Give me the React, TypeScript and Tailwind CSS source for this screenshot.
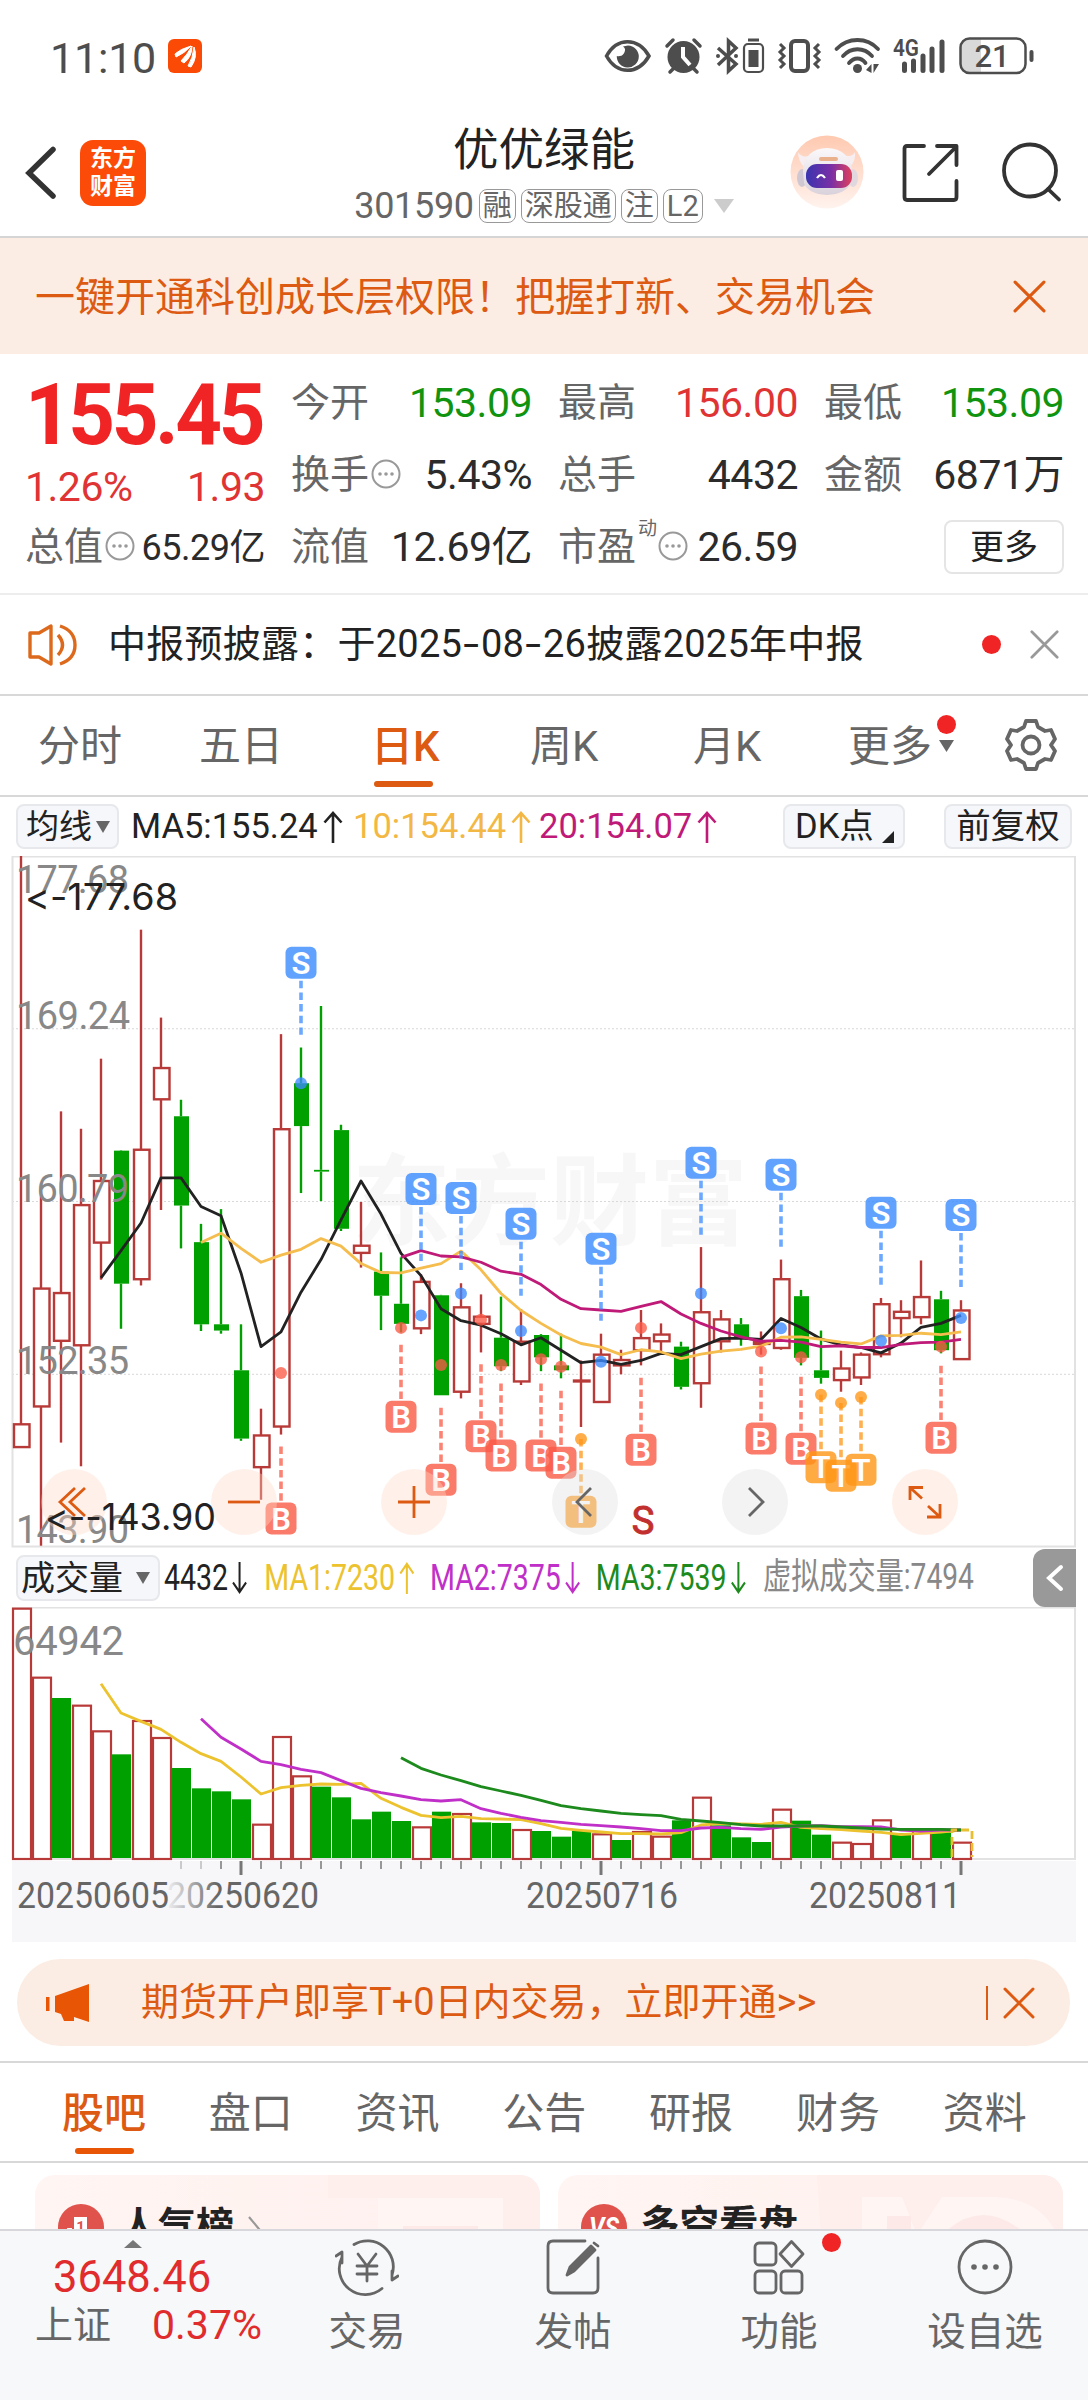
import type { ReactNode } from "react";

interface Candle {
  high: number;
  top: number;
  bottom: number;
  low: number;
  up: boolean;
}

type Row = [number, number, number, number, 0 | 1];

// high, body top, body bottom, low, up(1) / down(0)
const rows: Row[] = [
  [13, 1286, 1337, 1337, 1],
  [770, 982, 1246, 1558, 1],
  [585, 992, 1099, 1327, 1],
  [624, 795, 1109, 1380, 1],
  [467, 741, 879, 962, 1],
  [672, 673, 971, 1072, 0],
  [178, 671, 961, 975, 1],
  [375, 488, 558, 806, 1],
  [559, 596, 796, 892, 0],
  [837, 878, 1062, 1077, 0],
  [804, 1062, 1076, 1083, 0],
  [1062, 1165, 1318, 1323, 0],
  [1251, 1311, 1382, 1455, 1],
  [412, 625, 1291, 1309, 1],
  [442, 522, 618, 768, 0],
  [349, 716, 720, 786, 0],
  [615, 627, 848, 853, 0],
  [788, 886, 902, 935, 1],
  [901, 944, 998, 1075, 0],
  [912, 1016, 1061, 1080, 0],
  [950, 967, 1071, 1084, 1],
  [996, 997, 1221, 1221, 0],
  [970, 1024, 1213, 1228, 1],
  [995, 1045, 1061, 1125, 1],
  [1000, 1092, 1156, 1167, 0],
  [1028, 1101, 1190, 1198, 1],
  [1084, 1086, 1136, 1167, 0],
  [1083, 1154, 1165, 1183, 0],
  [1143, 1188, 1190, 1292, 1],
  [1083, 1130, 1236, 1236, 1],
  [1119, 1142, 1154, 1174, 1],
  [1030, 1093, 1120, 1154, 1],
  [1060, 1085, 1100, 1125, 1],
  [1101, 1112, 1202, 1208, 0],
  [889, 1035, 1194, 1249, 1],
  [1030, 1051, 1100, 1125, 1],
  [1048, 1062, 1092, 1110, 0],
  [1078, 1101, 1106, 1130, 1],
  [917, 961, 1115, 1119, 1],
  [985, 999, 1137, 1154, 0],
  [1076, 1165, 1182, 1195, 0],
  [1121, 1161, 1187, 1213, 1],
  [1125, 1130, 1181, 1198, 1],
  [1003, 1017, 1129, 1136, 1],
  [1008, 1034, 1048, 1091, 1],
  [919, 1001, 1046, 1062, 1],
  [987, 1006, 1120, 1127, 0],
  [1008, 1031, 1140, 1140, 1],
];

const candles: Candle[] = rows.map(([high, top, bottom, low, up]) => ({
  high,
  top,
  bottom,
  low,
  up: up === 1,
}));

const ma5 = [
  958, 897, 835, 734, 734, 798, 819, 947, 1112, 1079, 990, 917, 828, 741, 815,
  903, 953, 1027, 1054, 1064, 1083, 1108, 1092, 1120, 1148, 1143, 1152, 1143,
  1127, 1130, 1112, 1094, 1093, 1096, 1049, 1069, 1095, 1108, 1114, 1126, 1104,
  1069, 1060, 1042,
];
const ma10 = [
  879, 858, 892, 923, 907, 894, 870, 887, 926, 946, 947, 936, 926, 898, 940,
  993, 1031, 1060, 1086, 1105, 1113, 1130, 1119, 1124, 1139, 1129, 1122, 1118,
  1111, 1091, 1090, 1096, 1102, 1106, 1088, 1087, 1082, 1085, 1079,
];
const ma20 = [
  912, 897, 909, 911, 923, 943, 950, 973, 1006, 1027, 1030, 1033, 1022, 1011,
  1039, 1060, 1077, 1090, 1100, 1098, 1102, 1112, 1110, 1114, 1114, 1107, 1103,
  1102, 1096,
];

// candle index, badge level, dot level
const sells = [
  [14, 252, 522],
  [20, 759, 1042],
  [22, 779, 993],
  [25, 837, 1077],
  [29, 893, 1146],
  [34, 700, 993],
  [38, 727, 1071],
  [43, 812, 1099],
  [47, 817, 1048],
];
const buys = [
  [13, 1497, 1171],
  [19, 1269, 1070],
  [21, 1410, 1153],
  [23, 1313, 1052],
  [24, 1356, 1153],
  [26, 1356, 1140],
  [27, 1372, 1157],
  [31, 1343, 1070],
  [37, 1318, 1123],
  [39, 1341, 1136],
  [46, 1316, 1112],
];
const trades = [
  [28, 1482, 1319],
  [40, 1382, 1220],
  [41, 1401, 1238],
  [42, 1388, 1225],
];

const volumes: [number, 0 | 1][] = [
  [203, 1], [410, 1], [474, 0], [494, 1], [571, 1], [643, 0], [540, 1],
  [591, 1], [684, 0], [745, 0], [754, 0], [778, 0], [851, 1], [588, 1],
  [706, 1], [740, 0], [772, 0], [838, 0], [815, 0], [843, 0], [859, 1],
  [815, 0], [819, 1], [847, 0], [849, 0], [867, 1], [873, 0], [890, 0],
  [872, 0], [880, 1], [900, 0], [873, 1], [887, 1], [841, 0], [770, 1],
  [856, 0], [892, 0], [906, 0], [806, 1], [842, 0], [884, 0], [905, 1],
  [909, 1], [838, 1], [880, 0], [865, 1], [877, 0], [905, 1],
];
const vol1 = [
  431, 519, 544, 568, 607, 641, 664, 711, 762, 743, 736, 732, 733, 730, 775,
  802, 826, 833, 829, 836, 837, 839, 851, 865, 871, 876, 881, 881, 882, 878,
  855, 850, 852, 853, 847, 862, 866, 869, 873, 877, 884, 880, 876, 870,
];
const vol2 = [
  536, 592, 627, 664, 674, 688, 698, 722, 745, 758, 768, 779, 783, 779, 806,
  820, 832, 842, 847, 853, 857, 861, 866, 872, 872, 864, 862, 866, 868, 861,
  858, 857, 860, 860, 861, 870, 873, 870, 870,
];
const vol3 = [
  653, 685, 705, 722, 740, 753, 766, 781, 797, 806, 813, 820, 824, 827, 838,
  843, 848, 854, 858, 858, 858, 858, 861, 864, 867, 868, 868, 868, 870,
];

const RED = "#b83a38";
const GREEN = "#00a000";

const xOf = (i: number) => 21 + i * 20;
const yOf = (v: number) => (v - 13) / 2.24;
const volY = (v: number) => (v - 201) / 3;

const linePoints = (
  values: number[],
  start: number,
  scale: (v: number) => number
) => values.map((v, i) => `${xOf(start + i)},${scale(v)}`).join(" ");

interface MarkerProps {
  index: number;
  badge: number;
  dot: number;
  label: "S" | "B" | "T";
}

const markerColors = { S: "#3b8bff", B: "#fa5a46", T: "#ff9615" };

const Marker = ({ index, badge, dot, label }: MarkerProps) => {
  const x = xOf(index);
  const y = yOf(badge);
  const color = markerColors[label];
  let from = y + 18;
  let to = y + 72;
  if (label === "B") {
    from = y - 72;
    to = y - 17;
  }
  if (label === "T") {
    from = yOf(dot);
    to = y - 17;
  }
  return (
    <g>
      <circle cx={x} cy={yOf(dot)} r={6} fill={color} fillOpacity={0.78} />
      <line
        x1={x}
        x2={x}
        y1={from}
        y2={to}
        stroke={color}
        strokeOpacity={0.75}
        strokeWidth={3.6}
        strokeDasharray="7.5 4.2"
      />
      <rect
        x={x - 15.5}
        y={y - 16}
        width={31}
        height={32}
        rx={6}
        fill={color}
        fillOpacity={0.8}
      />
      <text
        x={x}
        y={y + 11}
        textAnchor="middle"
        fontSize={31}
        fontWeight={600}
        fill="#fff"
        className="font-['Roboto',sans-serif]"
      >
        {label}
      </text>
    </g>
  );
};

const RoundButton = ({
  x,
  gray = false,
  children,
}: {
  x: number;
  gray?: boolean;
  children: ReactNode;
}) => (
  <g transform={`translate(${x} 646)`}>
    <circle r={33} fill={gray ? "#e0e0e0" : "#ffd9c4"} fillOpacity={0.38} />
    <g fill="none" stroke={gray ? "#666" : "#dd5a12"} strokeWidth={2.8}>
      {children}
    </g>
  </g>
);

const KLineChart = () => (
  <svg width="1088" height="692" viewBox="0 0 1088 692" className="block">
    <text
      x="352"
      y="381"
      fontSize="99"
      fontWeight="700"
      fill="#f7f7f7"
      className="font-['Noto_Sans_CJK_SC',sans-serif]"
    >
      东方财富
    </text>
    {[400, 787, 1174].map((v) => (
      <line
        key={v}
        x1="12"
        x2="1075"
        y1={yOf(v)}
        y2={yOf(v)}
        stroke="#d8d8d8"
        strokeDasharray="2 2"
      />
    ))}
    <rect x="12.5" y="0.5" width="1062.5" height="690" fill="none" stroke="#e2e2e2" strokeWidth="2" />

    {candles.map((c, i) => {
      const x = xOf(i);
      const color = c.up ? RED : GREEN;
      return (
        <g key={i} stroke={color} strokeWidth={2.4}>
          <line x1={x} x2={x} y1={yOf(c.high)} y2={yOf(c.top)} />
          <line x1={x} x2={x} y1={yOf(c.bottom)} y2={yOf(c.low)} />
          {c.up ? (
            <rect
              x={x - 7}
              y={yOf(c.top)}
              width={15.5}
              height={yOf(c.bottom) - yOf(c.top)}
              fill={c.bottom - c.top < 8 ? RED : "#fff"}
            />
          ) : (
            <rect
              x={x - 7}
              y={yOf(c.top)}
              width={15}
              height={yOf(c.bottom) - yOf(c.top)}
              fill={GREEN}
              stroke="none"
            />
          )}
        </g>
      );
    })}

    <g fill="none" strokeWidth="2.8" strokeLinejoin="round">
      <polyline points={linePoints(ma5, 4, yOf)} stroke="#222" />
      <polyline points={linePoints(ma10, 9, yOf)} stroke="#f5bc4e" />
      <polyline points={linePoints(ma20, 19, yOf)} stroke="#bf1a78" />
    </g>

    <g className="font-['Roboto',sans-serif]" fontSize="38" fill="#888">
      <text x="16" y="37" textLength="113">177.68</text>
      <text x="16" y="173" textLength="114">169.24</text>
      <text x="16" y="346" textLength="113">160.79</text>
      <text x="16" y="518" textLength="113">152.35</text>
      <text x="16" y="687" textLength="113">143.90</text>
    </g>

    {buys.map(([i, badge, dot]) => (
      <Marker key={i} index={i} badge={badge} dot={dot} label="B" />
    ))}
    {sells.map(([i, badge, dot]) => (
      <Marker key={i} index={i} badge={badge} dot={dot} label="S" />
    ))}
    {trades.map(([i, badge, dot]) => (
      <Marker key={i} index={i} badge={badge} dot={dot} label="T" />
    ))}

    <RoundButton x={74}>
      <path d="M1 -14 L-14 0 L1 14 M11 -14 L-4 0 L11 14" />
    </RoundButton>
    <RoundButton x={244}>
      <path d="M-16 0 H16" />
    </RoundButton>
    <RoundButton x={414}>
      <path d="M-16 0 H16 M0 -16 V16" />
    </RoundButton>
    <RoundButton x={585} gray>
      <path d="M6 -14 L-8 0 L6 14" />
    </RoundButton>
    <RoundButton x={755} gray>
      <path d="M-6 -14 L8 0 L-6 14" />
    </RoundButton>
    <RoundButton x={925}>
      <path d="M-15 -2 V-14.500 H-2 M-15 -14.500 L-3 -3.500 M2 15 H15 V2 M15 15 L3 4" />
    </RoundButton>

    <g
      className="font-['Inter',sans-serif] [font-variant-ligatures:none] [font-feature-settings:'calt'_0]"
      fontSize="37"
      fill="#222"
    >
      <text x="25" y="54" textLength="153" lengthAdjust="spacingAndGlyphs">&lt;-177.68</text>
      <text x="45" y="674" textLength="171" lengthAdjust="spacingAndGlyphs">&lt;--143.90</text>
    </g>
    <text
      x="643"
      y="678"
      textAnchor="middle"
      fontSize="38"
      fill="#c22f2f"
      stroke="#c22f2f"
      className="font-['Roboto',sans-serif]"
    >
      S
    </text>
  </svg>
);

const VolumeChart = () => (
  <svg width="1088" height="254" viewBox="0 0 1088 254" className="block">
    <path d="M12 0.500 H1075 V252 H12" fill="none" stroke="#e2e2e2" strokeWidth="2" />
    {volumes.map(([v, up], i) => (
      <rect
        key={i}
        x={up ? xOf(i) - 8 : xOf(i) - 9}
        y={up ? volY(v) + 1 : volY(v)}
        width={up ? 18 : 19}
        height={volY(954) - volY(v)}
        fill={up ? "#fff" : GREEN}
        stroke={up ? RED : "none"}
        strokeWidth={2.2}
      />
    ))}
    <text
      x="13"
      y="48"
      fontSize="40"
      fill="#888"
      textLength="111"
      className="font-['Roboto',sans-serif]"
    >
      64942
    </text>
    <g fill="none" strokeWidth="2.8" strokeLinejoin="round">
      <polyline points={linePoints(vol1, 4, volY)} stroke="#ecc22e" />
      <polyline points={linePoints(vol2, 9, volY)} stroke="#c030c8" />
      <polyline points={linePoints(vol3, 19, volY)} stroke="#1c8a1c" />
      <path d="M952 250 V223 H972 V250" stroke="#e8bf30" strokeDasharray="8 4" />
    </g>
  </svg>
);

const DateAxis = () => (
  <div className="ml-3 h-[81px] w-[1064px] bg-[#f7f7fa]">
    <svg width="1064" height="81" viewBox="12 0 1064 81" className="block">
      <defs>
        <linearGradient id="fade" x1="0" x2="1">
          <stop offset="0" stopColor="#666" stopOpacity="0.05" />
          <stop offset="0.33" stopColor="#666" />
        </linearGradient>
      </defs>
      {volumes.map((_, i) => {
        const major = i === 11 || i === 29 || i === 47;
        if (i < 8) return null;
        return (
          <line
            key={i}
            x1={xOf(i)}
            x2={xOf(i)}
            y1="0"
            y2={major ? 14 : 8}
            stroke={i < 10 ? "#bbb" : "#777"}
            strokeWidth={major ? 3 : 1.5}
          />
        );
      })}
      <g className="font-['Roboto',sans-serif]" fontSize="36.500" fill="#666">
        <text x="17" y="47" textLength="152" lengthAdjust="spacingAndGlyphs">20250605</text>
        <text x="167" y="47" textLength="152" lengthAdjust="spacingAndGlyphs" fill="url(#fade)">20250620</text>
        <text x="526" y="47" textLength="152" lengthAdjust="spacingAndGlyphs">20250716</text>
        <text x="809" y="47" textLength="152" lengthAdjust="spacingAndGlyphs">20250811</text>
      </g>
    </svg>
  </div>
);

const StatusIcons = () => (
  <svg width="440" height="40" viewBox="0 0 440 40" fill="none" stroke="#4d4d4d">
    <path d="M6.500 20 C17 1 38 1 49 20 C38 39 17 39 6.500 20Z" strokeWidth="3.500" />
    <path d="M28 9.500 A11 11 0 1 1 16.800 20 A6.500 6.500 0 0 0 25 13 A6 6 0 0 0 23 10.500Z" fill="#4d4d4d" stroke="none" />
    <circle cx="83.500" cy="21" r="16" fill="#4d4d4d" stroke="none" />
    <path d="M83 11 V21 L90 29" stroke="#fff" strokeWidth="4" />
    <path d="M67 10 L73 4 M94 4 L100 10 M74 32 L70 36 M93 32 L97 36" strokeWidth="3.500" strokeLinecap="round" />
    <path d="M118 12 L136 28 L128.500 35 V5 L136 12 L118 29" strokeWidth="3.500" />
    <circle cx="118" cy="20" r="2" fill="#4d4d4d" stroke="none" />
    <circle cx="136" cy="20" r="2" fill="#4d4d4d" stroke="none" />
    <rect x="144" y="8" width="19" height="28" rx="4" strokeWidth="2.200" />
    <path d="M148 4 H159" strokeWidth="3" />
    <rect x="148.500" y="14" width="10" height="17" fill="#4d4d4d" stroke="none" />
    <rect x="191" y="5" width="17" height="30" rx="4" strokeWidth="4" />
    <path d="M180 8 L184 12 L180 16 L184 20 L180 24 L184 28 L180 32 M219 8 L215 12 L219 16 L215 20 L219 24 L215 28 L219 32" strokeWidth="3" />
    <path d="M236.500 13 C248 1 267 1 278 13 M243 20 C251 11 264 11 272 20 M249 27 C254 21 261 21 265.500 27" strokeWidth="3.800" strokeLinecap="round" />
    <circle cx="257.500" cy="32.500" r="4.500" fill="#4d4d4d" stroke="none" />
    <path d="M266 34 L271.500 28 V37Z M273.500 28 H279 L273.500 37Z" fill="#4d4d4d" stroke="none" />
    <text x="293" y="20" fontSize="23" fontWeight="600" fill="#4d4d4d" stroke="none" textLength="26" lengthAdjust="spacingAndGlyphs" className="font-['Roboto',sans-serif]">
      4G
    </text>
    <path d="M304.500 28 V34.500 M313.500 25 V34.500 M323 20 V34.500 M332 13 V34.500 M342 6 V34.500" strokeWidth="5" strokeLinecap="round" />
    <path d="M369 3 H381 V37 H369 Q361 36 361 28 V12 Q361 4 369 3Z" fill="#d9d9d9" stroke="none" />
    <rect x="360.500" y="2.500" width="65" height="34.500" rx="9" strokeWidth="2.500" />
    <rect x="429.500" y="14" width="4" height="12" rx="2" fill="#4d4d4d" stroke="none" />
    <text x="392" y="31" textAnchor="middle" fontSize="31" fontWeight="500" fill="#4d4d4d" stroke="none" className="font-['Roboto',sans-serif]">
      21
    </text>
  </svg>
);

const StatusBar = () => (
  <div className="flex h-[112px] items-start pl-[50px]">
    <div className="mt-[37px] w-[118px] text-[43px] leading-[42px] tracking-[-0.2px] text-[#4d4d4d]">
      11:10
    </div>
    <svg width="34" height="34" viewBox="0 0 34 34" className="mt-[39px]">
      <rect width="34" height="34" rx="6" fill="#fb4a05" />
      <path d="M7 15 Q12 10 23 7 Q17 14 8 18Z M13 22 Q19 16 24 7 Q24 18 16 24Z M20 27 Q25 19 26 8 Q30 18 23 28Z" fill="#fff" stroke="#fff" />
    </svg>
    <div className="mt-[36px] ml-[398px]">
      <StatusIcons />
    </div>
  </div>
);

const Robot = () => (
  <svg width="74" height="74" viewBox="0 0 74 74">
    <defs>
      <linearGradient id="halo" x1="0" y1="0" x2="0" y2="1">
        <stop offset="0" stopColor="#ffc9b0" />
        <stop offset="1" stopColor="#fff3ee" />
      </linearGradient>
      <linearGradient id="shell" x1="0" y1="0" x2="0" y2="1">
        <stop offset="0" stopColor="#fbf8fa" />
        <stop offset="1" stopColor="#d9d2dc" />
      </linearGradient>
      <linearGradient id="visor" x1="0" x2="1">
        <stop offset="0" stopColor="#3a34b0" />
        <stop offset="0.55" stopColor="#7a2fa5" />
        <stop offset="1" stopColor="#e0405c" />
      </linearGradient>
    </defs>
    <circle cx="37" cy="37" r="36.500" fill="url(#halo)" />
    <path d="M8 17 Q8 26 14 32 L22 20 Q12 24 8 17Z M65 17 Q66 26 60 32 L53 20 Q62 23 65 17Z" fill="#f6eef0" />
    <ellipse cx="12" cy="43" rx="5" ry="9" fill="#cfc8d2" />
    <ellipse cx="63" cy="43" rx="5" ry="9" fill="#e0d8de" />
    <path d="M13 36 Q14 14 37 13 Q60 14 62 36 L61 48 Q56 59 37 60 Q18 59 14 48Z" fill="url(#shell)" />
    <rect x="29" y="22" width="19" height="4" rx="2" fill="#eab28c" />
    <rect x="16" y="29" width="46" height="24" rx="11" fill="url(#visor)" />
    <path d="M27 43 Q31 37 35 43" stroke="#fff" strokeWidth="2.200" fill="none" />
    <rect x="46" y="35" width="7" height="11" rx="2" fill="#fff" />
  </svg>
);

const Tag = ({ children }: { children: string }) => (
  <span className="mr-[5px] flex h-[34px] items-center rounded-lg border-[1.5px] border-[#999] px-[3px] text-[29px] leading-none">
    {children}
  </span>
);

const Header = () => (
  <div className="flex h-[126px] border-b-2 border-[#d5d5d5]">
    <div className="flex w-[345px] pl-[24px]">
      <svg width="36" height="54" viewBox="0 0 36 54" className="mt-[34px]">
        <path d="M29 3.500 L5 27 L29 50" fill="none" stroke="#333" strokeWidth="5.500" strokeLinecap="round" />
      </svg>
      <div className="mt-[28px] ml-[20px] h-[66px] w-[66px] rounded-[13px] bg-[#fc4a08] pt-[5px] text-center text-[23px] leading-[28px] font-bold text-white">
        东方
        <br />
        财富
      </div>
    </div>
    <div className="flex w-[398px] flex-col items-center">
      <div className="mt-[14px] text-[45.5px] leading-[50px] text-[#222]">优优绿能</div>
      <div className="mt-[11px] flex h-[38px] items-center text-[36px] leading-none text-[#666]">
        <span className="mr-[5px] tracking-[-0.3px]">301590</span>
        <Tag>融</Tag>
        <Tag>深股通</Tag>
        <Tag>注</Tag>
        <Tag>L2</Tag>
        <svg width="20" height="14" className="ml-[6px]">
          <path d="M0 0 H20 L10 14Z" fill="#ccc" />
        </svg>
      </div>
    </div>
    <div className="mt-[23px] ml-[47px]">
      <Robot />
    </div>
    <svg width="62" height="62" viewBox="0 0 62 62" className="mt-[30px] ml-[37px]" fill="none" stroke="#333" strokeWidth="3.800" strokeLinecap="round" strokeLinejoin="round">
      <path d="M23 4 H6 Q3.500 4 3.500 6.500 V55 Q3.500 58 6 58 H53 Q55.500 58 55.500 55 V39 M36 4 H55.500 V23 M55 5 L28 32" />
    </svg>
    <svg width="62" height="62" viewBox="0 0 62 62" className="mt-[30px] ml-[38px]" fill="none" stroke="#333" strokeWidth="3.800" strokeLinecap="round">
      <circle cx="29" cy="28.500" r="26" />
      <path d="M47 47 L58 57.500" />
    </svg>
  </div>
);

const CloseIcon = ({ size, color }: { size: number; color: string }) => (
  <svg width={size} height={size} viewBox="0 0 32 32" fill="none" stroke={color} strokeWidth="3" strokeLinecap="round">
    <path d="M2 2 L30 30 M30 2 L2 30" />
  </svg>
);

const TopBanner = () => (
  <div className="flex h-[116px] items-center justify-between bg-[#fcede4] pr-[42px] pl-[35px] text-[#dd5a12]">
    <span className="pt-[3px] text-[40px]">一键开通科创成长层权限！把握打新、交易机会</span>
    <CloseIcon size={33} color="#dd5a12" />
  </div>
);

const Dots = () => (
  <svg width="30" height="30" viewBox="0 0 30 30" className="mb-1 ml-[2px] shrink-0">
    <circle cx="15" cy="15" r="13.500" fill="none" stroke="#999" strokeWidth="2" />
    <circle cx="9" cy="15" r="1.800" fill="#999" />
    <circle cx="15" cy="15" r="1.800" fill="#999" />
    <circle cx="21" cy="15" r="1.800" fill="#999" />
  </svg>
);

interface CellProps {
  label: string;
  value: string;
  color?: string;
  info?: boolean;
  sup?: string;
  small?: boolean;
}

const Cell = ({ label, value, color = "text-[#2b2b2b]", info, sup, small }: CellProps) => (
  <div className="flex h-[72px] items-center justify-between pt-[1px] leading-none whitespace-nowrap">
    <div className="flex items-center text-[39px] text-[#666]">
      {label}
      {sup && <span className="-mr-[1px] mb-[38px] ml-[2px] text-[19px]">{sup}</span>}
      {info && <Dots />}
    </div>
    <span className={`${small ? "text-[36px]" : "text-[41px]"} tracking-[-0.5px] ${color}`}>
      {value}
    </span>
  </div>
);

const Quote = () => (
  <div className="flex h-[241px] gap-[26px] border-b-2 border-[#ededed] pt-[13px] pl-[25px]">
    <div className="w-[240px]">
      <div className="flex h-24 items-center text-[85px] leading-none font-bold tracking-[-3.6px] text-[#f02424]">
        <span className="origin-left scale-x-[0.96]">155.45</span>
      </div>
      <div className="flex h-12 items-center justify-between pt-[1px] text-[41px] leading-none tracking-[-0.5px] text-[#e03434]">
        <span>1.26%</span>
        <span>1.93</span>
      </div>
      <Cell label="总值" value="65.29亿" info small />
    </div>
    <div className="w-[241px]">
      <Cell label="今开" value="153.09" color="text-[#109410]" />
      <Cell label="换手" value="5.43%" info />
      <Cell label="流值" value="12.69亿" />
    </div>
    <div className="w-[240px]">
      <Cell label="最高" value="156.00" color="text-[#e03434]" />
      <Cell label="总手" value="4432" />
      <Cell label="市盈" value="26.59" sup="动" info />
    </div>
    <div className="w-[240px]">
      <Cell label="最低" value="153.09" color="text-[#109410]" />
      <Cell label="金额" value="6871万" />
      <div className="flex h-[72px] items-center justify-end">
        <div className="flex h-[54px] w-[120px] items-center justify-center rounded-lg border-2 border-[#e5e5e5] text-[34px] leading-none text-[#222]">
          更多
        </div>
      </div>
    </div>
  </div>
);

const Dash = () => <span className="mx-[4px] inline-block scale-x-150">-</span>;

const Notice = () => (
  <div className="flex h-[101px] items-center border-b-2 border-[#d8d8d8] pl-[27px]">
    <svg width="52" height="44" viewBox="0 0 52 44" fill="none" stroke="#dd6a1c" strokeWidth="3.400" strokeLinejoin="round">
      <path d="M3 10 H12 L24 3 V41 L12 34 H3Z M31 12 Q40 22 31 32 M33 3 Q48 8 48 22 Q48 36 33 41" />
    </svg>
    <div className="ml-[29px] w-[873px] text-[38px] tracking-[0.25px] whitespace-nowrap text-[#222]">
      中报预披露：于2025<Dash />08<Dash />26披露2025年中报
    </div>
    <span className="ml-[1px] h-[19px] w-[19px] rounded-full bg-[#f02424]" />
    <div className="ml-[29px]">
      <CloseIcon size={29} color="#999" />
    </div>
  </div>
);

const GearIcon = () => (
  <svg width="52" height="54" viewBox="0 0 52 54" fill="none" stroke="#666" strokeWidth="3.800" strokeLinejoin="round">
    <path d="M21 3 H31 L33 9 L40 13 L46 12 L50 21 L46 27 L50 33 L46 42 L40 41 L33 45 L31 51 H21 L19 45 L12 41 L6 42 L2 33 L6 27 L2 21 L6 12 L12 13 L19 9Z" />
    <circle cx="26" cy="27" r="8.500" />
  </svg>
);

const PeriodTabs = () => (
  <div className="flex h-[101px] items-center border-b-2 border-[#d8d8d8] pt-[2px] pl-[38px] text-[42px] leading-none text-[#666]">
    <span className="w-[161px]">分时</span>
    <span className="w-[172px]">五日</span>
    <span className="relative w-[159px] font-medium text-[#dd5a12]">
      日K
      <span className="absolute top-[55px] left-[3px] h-[6px] w-[59px] rounded-full bg-[#dd5a12]" />
    </span>
    <span className="w-[163px]">周K</span>
    <span className="w-[155px]">月K</span>
    <span className="relative w-[157px]">
      更多
      <span className="absolute -top-[11px] left-[89px] h-[19px] w-[19px] rounded-full bg-[#f02424]" />
      <svg width="15" height="12" className="absolute top-[14px] left-[91px]">
        <path d="M0 0 H15 L7.500 12Z" fill="#666" />
      </svg>
    </span>
    <div className="mb-[3px]">
      <GearIcon />
    </div>
  </div>
);

const Arrow = ({ down = false }: { down?: boolean }) => (
  <svg
    width="22"
    height="34"
    viewBox="0 0 22 34"
    fill="none"
    stroke="currentColor"
    strokeWidth="2.600"
    className={down ? "ml-1 rotate-180" : "ml-1"}
  >
    <path d="M11 33 V3 M2.500 12.500 L11 3 L19.500 12.500" />
  </svg>
);

const MaRow = () => (
  <div className="flex h-[59px] items-center pl-4 text-[34.5px] leading-none whitespace-nowrap text-[#222]">
    <div className="flex h-[45px] w-[103px] items-center rounded-lg border-2 border-[#e6e8ec] bg-[#f6f7fa] pl-[8px]">
      <span className="text-[33px]">均线</span>
      <svg width="14" height="12" className="ml-[4px]">
        <path d="M0 0 H14 L7 12Z" fill="#666" />
      </svg>
    </div>
    <div className="ml-[12px] flex w-[222px] items-center">MA5:155.24<Arrow /></div>
    <div className="flex w-[186px] items-center text-[#f3b744]">10:154.44<Arrow /></div>
    <div className="flex w-[244px] items-center text-[#bf1a78]">20:154.07<Arrow /></div>
    <div className="flex h-[45px] w-[122px] items-center rounded-lg border-2 border-[#e6e8ec] bg-[#f6f7fa] pl-[10px]">
      DK点
      <svg width="12" height="12" className="mt-5 ml-[8px]">
        <path d="M12 0 V12 H0Z" fill="#222" />
      </svg>
    </div>
    <div className="ml-[39px] flex h-[45px] w-[128px] items-center justify-center rounded-lg border-2 border-[#e6e8ec] bg-[#f6f7fa]">
      前复权
    </div>
  </div>
);

const VolumeHeader = () => (
  <div className="flex h-[59px] items-center pl-4 text-[37px] leading-none whitespace-nowrap">
    <div className="flex h-[46px] w-[144px] shrink-0 items-center rounded-lg border-2 border-[#e6e8ec] bg-[#f6f7fa] pl-[3px] text-[34px] text-[#222]">
      成交量
      <svg width="14" height="12" className="ml-[13px]">
        <path d="M0 0 H14 L7 12Z" fill="#666" />
      </svg>
    </div>
    <div className="ml-[4px] w-[869px]">
      <div className="flex w-[1120px] origin-left scale-x-[0.771] items-center">
        <div className="flex w-[130px] items-center text-[#222]">4432<Arrow down /></div>
        <div className="flex w-[215px] items-center text-[#ecc22e]">MA1:7230<Arrow /></div>
        <div className="flex w-[215px] items-center text-[#c030c8]">MA2:7375<Arrow down /></div>
        <div className="flex w-[217px] items-center text-[#1c8a1c]">MA3:7539<Arrow down /></div>
        <div className="text-[36.5px] text-[#888]">虚拟成交量:7494</div>
      </div>
    </div>
    <div className="flex h-[58px] w-[43px] items-center justify-center rounded-l-[12px] bg-[#999]">
      <svg width="18" height="28" viewBox="0 0 18 28" fill="none" stroke="#fff" strokeWidth="4" strokeLinecap="round">
        <path d="M15 3 L3 14 L15 25" />
      </svg>
    </div>
  </div>
);

const Promo = () => (
  <div className="mt-[17px] ml-[17px] flex h-[87px] w-[1053px] items-center rounded-full bg-[#fcede4] pl-[28px] text-[#dd5a12]">
    <svg width="46" height="40" viewBox="0 0 46 40" fill="#e85504">
      <path d="M1 14 H4.500 V28 H1Z M10 13 L44 1 V39 L29 34 V38 H19 L16 31 L10 29Z" />
    </svg>
    <span className="ml-[50px] w-[845px] text-[38px] whitespace-nowrap">
      期货开户即享T+0日内交易，立即开通&gt;&gt;
    </span>
    <span className="h-[34px] w-[1.500px] bg-[#dd5a12]" />
    <div className="ml-[15px]">
      <CloseIcon size={32} color="#dd5a12" />
    </div>
  </div>
);

const sections = ["股吧", "盘口", "资讯", "公告", "研报", "财务", "资料"];

const SectionTabs = () => (
  <div className="mt-[15px] flex h-[102px] items-center border-y-2 border-[#d8d8d8] pt-[4px] pl-[30.500px] text-[42px] leading-none text-[#666]">
    {sections.map((name, i) => (
      <div
        key={name}
        className={`relative w-[146.800px] text-center ${i === 0 ? "font-medium text-[#dd5a12]" : ""}`}
      >
        {name}
        {i === 0 && (
          <span className="absolute top-[55px] left-[44px] h-[6px] w-[59px] rounded-full bg-[#e85504]" />
        )}
      </div>
    ))}
  </div>
);

const Cards = () => (
  <div className="flex h-[66px] gap-[18px] overflow-hidden pt-[12px] pl-[35px]">
    <div className="relative flex h-[120px] w-[505px] items-start overflow-hidden rounded-[20px] bg-gradient-to-r from-[#fff5f2] to-[#fff0ee] pt-[29px] pl-[23px]">
      <svg width="212" height="120" className="absolute top-0 right-0">
        <path d="M0 0 H212 V120 H50 V23 H0Z" fill="#feeeec" />
        <path d="M50 23 H175 V120 H50Z" fill="#fff5f3" />
        <path d="M75 51 H150 V120 H75Z" fill="#fdeae8" />
      </svg>
      <svg width="46" height="46" viewBox="0 0 46 46">
        <circle cx="23" cy="23" r="23" fill="#e0524c" />
        <path d="M9 24 H14 V34 H9Z M16 13 H29 V34 H16Z M31 28 H37 V34 H31Z" fill="#fff" />
        <text x="22.500" y="28" textAnchor="middle" fontSize="15" fontWeight="700" fill="#e0524c">1</text>
      </svg>
      <span className="mt-[3px] ml-[16px] text-[38px] leading-[38px] font-bold text-[#222]">人气榜</span>
      <svg width="14" height="28" viewBox="0 0 14 28" className="mt-[11px] ml-[13px]" fill="none" stroke="#999" strokeWidth="2.200">
        <path d="M2 2 L12 14 L2 26" />
      </svg>
    </div>
    <div className="relative flex h-[120px] w-[505px] items-start overflow-hidden rounded-[20px] bg-gradient-to-r from-[#fff5f2] to-[#fff0ee] pt-[29px] pl-[23px]">
      <svg width="246" height="120" className="absolute top-0 right-0">
        <path d="M0 0 H246 V120 H8Z" fill="#feeeec" />
        <path d="M45 22 H85 L100 60 L125 22 H180 Q225 25 240 60 V120 H45Z" fill="#fff5f3" />
        <path d="M70 41 H94 V120 H70Z M125 60 Q165 20 210 60 V120 H125Z" fill="#fdeae8" />
      </svg>
      <svg width="46" height="46" viewBox="0 0 46 46">
        <circle cx="23" cy="23" r="23" fill="#e0524c" />
        <text x="23" y="34" textAnchor="middle" fontSize="30" fontStyle="italic" fontWeight="700" fill="#fff" textLength="30" lengthAdjust="spacingAndGlyphs">
          VS
        </text>
      </svg>
      <span className="mt-[3px] ml-[13px] text-[39.5px] leading-[38px] font-bold text-[#222]">多空看盘</span>
    </div>
  </div>
);

const NavItem = ({ label, children }: { label: string; children: ReactNode }) => (
  <div className="relative flex w-[206px] flex-col items-center pt-[7px]">
    <svg width="64" height="58" viewBox="0 0 64 58" fill="none" stroke="#666" strokeWidth="2.800" strokeLinecap="round" strokeLinejoin="round">
      {children}
    </svg>
    <span className="mt-[16px] text-[38.5px] leading-[40px] text-[#666]">{label}</span>
  </div>
);

const BottomNav = () => (
  <div className="flex h-[172px] border-t-2 border-[#d8d8dc] bg-[#f7f8fa]">
    <div className="w-[264px] pt-[9px]">
      <svg width="18" height="8" className="ml-[124px] block">
        <path d="M0 8 L9 0 L18 8Z" fill="#777" />
      </svg>
      <div className="mt-[7px] ml-[53px] text-[43.5px] leading-[46px] text-[#e02c2c]">3648.46</div>
      <div className="mt-[1px] flex items-center text-[38px] leading-[46px]">
        <span className="ml-[35px] text-[#666]">上证</span>
        <span className="ml-[41px] text-[41px] text-[#e02c2c]">0.37%</span>
      </div>
    </div>
    <NavItem label="交易">
      <path d="M19 6.500 A26 26 0 0 1 57 37 M47 50.500 A26 26 0 0 1 7 19 M1 18 L7 14 V25 M63 38 L57 42 V33" />
      <path d="M23 16 L32 28 L41 16 M32 28 V43 M22 28 H42 M22 36 H42" />
    </NavItem>
    <NavItem label="发帖">
      <path d="M44 3 H12 Q7 3 7 8 V50 Q7 55 12 55 H52 Q57 55 57 50 V20" />
      <path d="M26 37 L29 29 L50 8 L54 12 L33 33Z M53 5 L57 8" fill="#666" />
    </NavItem>
    <NavItem label="功能">
      <rect x="8" y="5" width="21" height="22" rx="4" />
      <path d="M44.500 3.500 L56 16 L44.500 28.500 L33 16Z" />
      <rect x="8" y="33" width="21" height="22" rx="4" />
      <rect x="34" y="33" width="21" height="22" rx="4" />
    </NavItem>
    <div className="relative">
      <span className="absolute top-[2px] -left-[60px] h-[19px] w-[19px] rounded-full bg-[#f02424]" />
    </div>
    <NavItem label="设自选">
      <circle cx="32" cy="29" r="26" />
      <g fill="#666" stroke="none">
        <circle cx="21" cy="29" r="2.800" />
        <circle cx="32" cy="29" r="2.800" />
        <circle cx="43" cy="29" r="2.800" />
      </g>
    </NavItem>
  </div>
);

export default function App() {
  return (
    <div className="h-[2400px] w-[1088px] overflow-hidden bg-white font-['Roboto','Noto_Sans_CJK_SC',sans-serif]">
      <StatusBar />
      <Header />
      <TopBanner />
      <Quote />
      <Notice />
      <PeriodTabs />
      <MaRow />
      <KLineChart />
      <VolumeHeader />
      <VolumeChart />
      <DateAxis />
      <Promo />
      <SectionTabs />
      <Cards />
      <BottomNav />
    </div>
  );
}
